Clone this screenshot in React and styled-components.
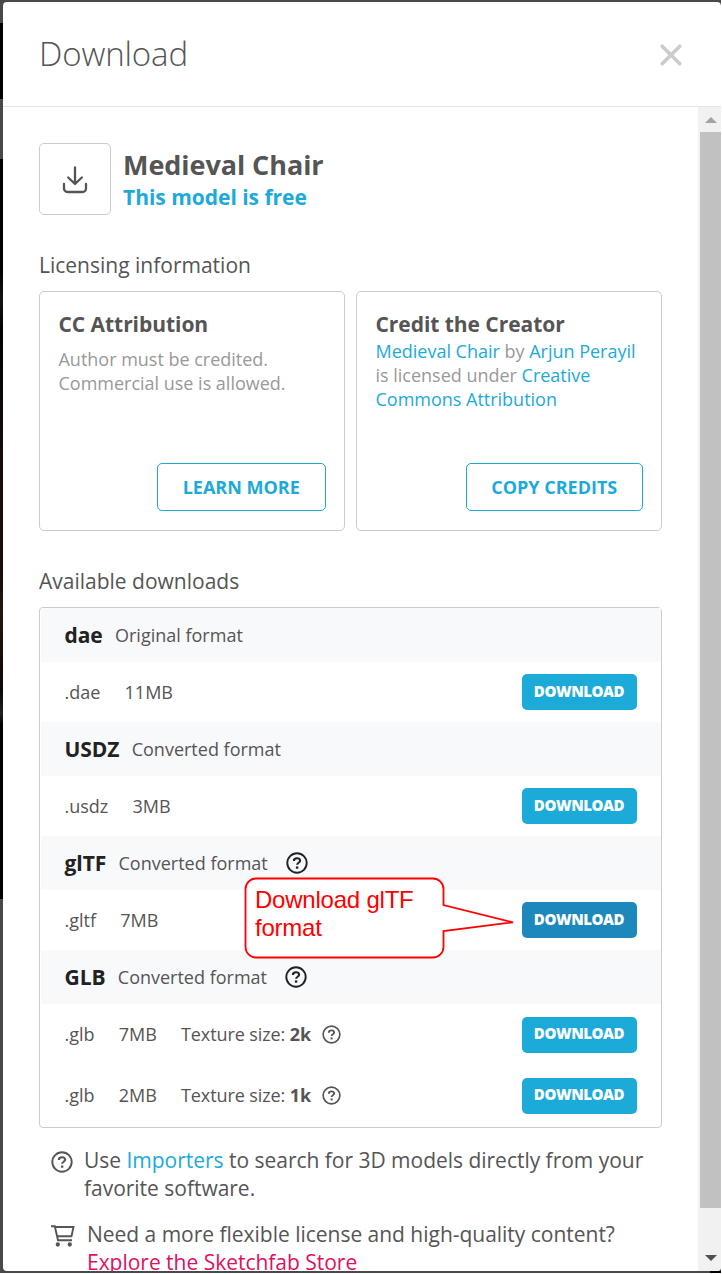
import React from "react";
import styled, { createGlobalStyle } from "styled-components";

const GlobalStyle = createGlobalStyle`
  *, *::before, *::after { box-sizing: border-box; }
  body { margin: 0; background: #fff; font-family: "Open Sans", sans-serif; color: #555; }
  h1, h2, h3, p { margin: 0; }
`;

const Backdrop = styled.div`
  display: flex;
  width: 721px;
  height: 1273px;
  overflow: hidden;
  padding: 2px 0 2px 3px;
  background:
    linear-gradient(#000, #000) right bottom / 11px 2px no-repeat,
    linear-gradient(#4a4848 0 23px, #020001 23px 99px, #4a4848 99px 159px, #000 159px 270px, #141416 300px, #020202 330px, #170e0b 480px, #170e0b 580px, #241710 610px, #0c0705 690px, #222 713px, #000 725px 899px, #4a4848 899px) left top / 3px 100% no-repeat,
    #4a4848;
`;

const Modal = styled.section`
  display: flex;
  flex-direction: column;
  width: 718px;
  height: 1269px;
  overflow: hidden;
  background: #fff;
  border-radius: 4px;
`;

const Header = styled.header`
  display: flex;
  flex: none;
  align-items: center;
  justify-content: space-between;
  height: 105px;
  padding: 0 38.5px 0 36px;
  border-bottom: 1px solid #e5e5e5;

  svg { margin-top: 1px; }
`;

const Title = styled.h1`
  font-size: 33px;
  font-weight: 300;
  line-height: 48px;
  letter-spacing: -0.12px;
`;

const Viewport = styled.div`
  display: flex;
  flex: 1;
  min-height: 0;
`;

const Content = styled.main`
  width: 695px;
  padding: 36px 36px 0;
  overflow: hidden;
`;

const Scrollbar = styled.div`
  display: flex;
  flex-direction: column;
  width: 23px;
  background: #f1f1f1;
`;

const ScrollArrow = styled.div`
  display: flex;
  align-items: center;
  justify-content: center;
  flex: ${(p) => (p.$last ? "1" : "0 0 25px")};
  padding: ${(p) => (p.$last ? "37px 0 0 2px" : "1px 0 0 2px")};
`;

const Thumb = styled.div`
  height: 1076px;
  margin-left: 2px;
  background: #c1c1c1;
`;

const Model = styled.div`
  display: flex;
  gap: 12px;
  height: 72px;
`;

const ModelIcon = styled.div`
  display: grid;
  place-items: center;
  width: 72px;
  height: 72px;
  padding-top: 1px;
  border: 1px solid #ccc;
  border-radius: 5px;
`;

const ModelName = styled.h2`
  font-size: 27px;
  font-weight: 700;
  line-height: 36px;
  padding-top: 4px;
  letter-spacing: -0.06px;
`;

const Price = styled.p`
  color: #1caad9;
  font-size: 21px;
  font-weight: 700;
  line-height: 28px;
  letter-spacing: -0.02px;
`;

const SectionTitle = styled.h2`
  font-size: 21px;
  font-weight: 400;
  line-height: 30px;
  padding-top: 35px;
  margin-bottom: 11px;
`;

const Cards = styled.div`
  display: grid;
  grid-template-columns: 306px 306px;
  gap: 11px;
`;

const Card = styled.article`
  display: flex;
  flex-direction: column;
  height: 240px;
  padding: 18px 18px 19px 18.5px;
  border: 1px solid #ccc;
  border-radius: 5px;
`;

const CardTitle = styled.h3`
  font-size: 21px;
  font-weight: 700;
  line-height: 29px;
  letter-spacing: -0.05px;
`;

const CardText = styled.p`
  margin-top: ${(p) => p.$top || 0}px;
  color: #999;
  font-size: 18px;
  line-height: 24px;
  letter-spacing: -0.01px;
  white-space: nowrap;
`;

const Link = styled.span`
  color: ${(p) => (p.$store ? "#e0105e" : "#1caad9")};
`;

const OutlineButton = styled.button`
  align-self: flex-end;
  width: ${(p) => p.$w}px;
  height: 48px;
  margin-top: auto;
  padding: 0 0.5px 0 0;
  background: #fff;
  border: 1px solid #1caad9;
  border-radius: 5px;
  color: #1caad9;
  font: 700 18px/46px "Open Sans", sans-serif;
`;

const Table = styled.div`
  position: relative;
  height: 521px;
  border: 1px solid #ccc;
  border-radius: 4px;
`;

const FormatRow = styled.div`
  display: flex;
  align-items: center;
  gap: 12.3px;
  height: 54px;
  margin-left: 1px;
  padding-left: 23.5px;
  background: #f8f9fb;
  font-size: 18px;
`;

const FormatName = styled.strong`
  color: #222;
  font-size: 21px;
  letter-spacing: -0.06px;
`;

const FileRow = styled.div`
  display: flex;
  align-items: center;
  gap: 24.2px;
  height: ${(p) => (p.$tall ? 61 : 60)}px;
  padding: 0 24px ${(p) => (p.$tall ? 1 : 0)}px 24.5px;
  font-size: 18px;
`;

const Texture = styled.span`
  display: flex;
  align-items: center;
  gap: 11px;
  letter-spacing: -0.1px;
`;

const DownloadButton = styled.button`
  width: 115px;
  height: 36px;
  margin: ${(p) => (p.$low ? 2 : 0)}px 0 0 auto;
  padding: 0 1px ${(p) => (p.$low ? 4 : 2)}px 0;
  background: ${(p) => (p.$active ? "#1c88bc" : "#1caad9")};
  border: 0;
  border-radius: 5px;
  color: #fff;
  font: 800 15px/${(p) => (p.$low ? 32 : 34)}px "Open Sans", sans-serif;
  letter-spacing: -0.42px;
`;

const Callout = styled.div`
  position: absolute;
  left: 204px;
  top: 269px;
  width: 272px;
  height: 84px;
  padding: 9px 0 0 11px;
  color: #f00;
  font: 24px/28px "Liberation Sans", Arial, sans-serif;
  letter-spacing: -0.22px;

  svg { position: absolute; left: 0; top: 0; z-index: 0; }
  span { position: relative; }
`;

const Note = styled.div`
  display: flex;
  gap: ${(p) => p.$gap}px;
  margin-top: 18px;
  padding-left: ${(p) => p.$left}px;
  font-size: 21px;
  line-height: 28px;
  letter-spacing: -0.02px;
  white-space: nowrap;

  svg { flex: none; margin-top: 5px; }
`;

const Help = ({ size = 22, color = "#555", width = 1.9 }) => (
  <svg width={size} height={size} viewBox="0 0 22 22" fill="none" stroke={color} strokeWidth={width}>
    <circle cx="11" cy="11" r="9.7" />
    <path d="M7.900 8.900C7.900 7.200 9.100 6.200 11 6.200s3.100 1 3.100 2.500c0 2.100-3 2-3 4.100" strokeWidth="2.100" />
    <path d="M11.100 14.400v2.300" strokeWidth="2.400" />
  </svg>
);

const formats = [
  { name: "dae", kind: "Original format", files: [{ ext: ".dae", size: "11MB" }] },
  { name: "USDZ", kind: "Converted format", files: [{ ext: ".usdz", size: "3MB" }] },
  { name: "glTF", kind: "Converted format", help: true, files: [{ ext: ".gltf", size: "7MB", active: true }] },
  {
    name: "GLB", kind: "Converted format", help: true,
    files: [{ ext: ".glb", size: "7MB", texture: "2k" }, { ext: ".glb", size: "2MB", texture: "1k" }],
  },
];

const HelpSlot = styled.span`
  display: flex;
  margin-left: 5.5px;
`;

export default function App() {
  return (
    <Backdrop>
      <GlobalStyle />
      <Modal>
        <Header>
          <Title>Download</Title>
          <svg width="24" height="24" viewBox="0 0 24 24" stroke="#ccc" strokeWidth="3.600" strokeLinecap="round">
            <path d="M3.200 3.200l17.600 17.600M20.800 3.200L3.200 20.800" />
          </svg>
        </Header>
        <Viewport>
          <Content>
            <Model>
              <ModelIcon>
                <svg width="26" height="28" viewBox="0 0 26 28" fill="none" stroke="#555" strokeWidth="2.300" strokeLinecap="round" strokeLinejoin="round">
                  <path d="M13 1.500v16.500M6.200 11.500l6.800 6.500 6.800-6.500M2 18v4.500a3.500 3.500 0 0 0 3.500 3.500h15a3.500 3.500 0 0 0 3.500-3.500v-4.500" />
                </svg>
              </ModelIcon>
              <div>
                <ModelName>Medieval Chair</ModelName>
                <Price>This model is free</Price>
              </div>
            </Model>
            <SectionTitle>Licensing information</SectionTitle>
            <Cards>
              <Card>
                <CardTitle>CC Attribution</CardTitle>
                <CardText $top={8}>Author must be credited.<br />Commercial use is allowed.</CardText>
                <OutlineButton $w={169}>LEARN MORE</OutlineButton>
              </Card>
              <Card>
                <CardTitle>Credit the Creator</CardTitle>
                <CardText>
                  <Link>Medieval Chair</Link> by <Link>Arjun Perayil</Link><br />
                  is licensed under <Link>Creative<br />Commons Attribution</Link>
                </CardText>
                <OutlineButton $w={177}>COPY CREDITS</OutlineButton>
              </Card>
            </Cards>
            <SectionTitle>Available downloads</SectionTitle>
            <Table>
              {formats.map((f) => (
                <React.Fragment key={f.name}>
                  <FormatRow>
                    <FormatName>{f.name}</FormatName>
                    <span>{f.kind}</span>
                    {f.help && <HelpSlot><Help color="#222" width={1.9} /></HelpSlot>}
                  </FormatRow>
                  {f.files.map((file) => (
                    <FileRow key={file.size} $tall={!!file.texture}>
                      <span>{file.ext}</span>
                      <span>{file.size}</span>
                      {file.texture && (
                        <Texture>
                          <span>Texture size: <b>{file.texture}</b></span>
                          <Help size={19} />
                        </Texture>
                      )}
                      <DownloadButton $active={file.active} $low={!!file.texture}>DOWNLOAD</DownloadButton>
                    </FileRow>
                  ))}
                </React.Fragment>
              ))}
              <Callout>
                <svg width="272" height="84" viewBox="0 0 272 84">
                  <path d="M12 1.500H189a10.500 10.500 0 0 1 10.500 10.500V28L269 45.300 199.500 54V70a10.500 10.500 0 0 1-10.500 10.500H12A10.500 10.500 0 0 1 1.500 70V12A10.500 10.500 0 0 1 12 1.500Z" fill="#fff" stroke="#f00" strokeWidth="1.800" />
                </svg>
                <span>Download glTF<br />format</span>
              </Callout>
            </Table>
            <Note $gap={11.5} $left={11.5}>
              <Help />
              <p>Use <Link>Importers</Link> to search for 3D models directly from your<br />favorite software.</p>
            </Note>
            <Note $gap={12} $left={12}>
              <svg width="24" height="22" viewBox="0 0 24 22" fill="none" stroke="#555" strokeWidth="1.900">
                <path d="M0 1.200h3.800l3.200 14h14M4.200 2h18.300l-2 9.300H6" />
                <circle cx="6.800" cy="19.500" r="1.200" fill="#555" />
                <circle cx="18.800" cy="19.500" r="1.200" fill="#555" />
              </svg>
              <p>Need a more flexible license and high-quality content?<br /><Link $store>Explore the Sketchfab Store</Link></p>
            </Note>
          </Content>
          <Scrollbar>
            <ScrollArrow><svg width="12" height="6"><path d="M0 6L6 0l6 6z" fill="#a3a3a3" /></svg></ScrollArrow>
            <Thumb />
            <ScrollArrow $last><svg width="12" height="6"><path d="M0 0h12L6 6z" fill="#505050" /></svg></ScrollArrow>
          </Scrollbar>
        </Viewport>
      </Modal>
    </Backdrop>
  );
}
